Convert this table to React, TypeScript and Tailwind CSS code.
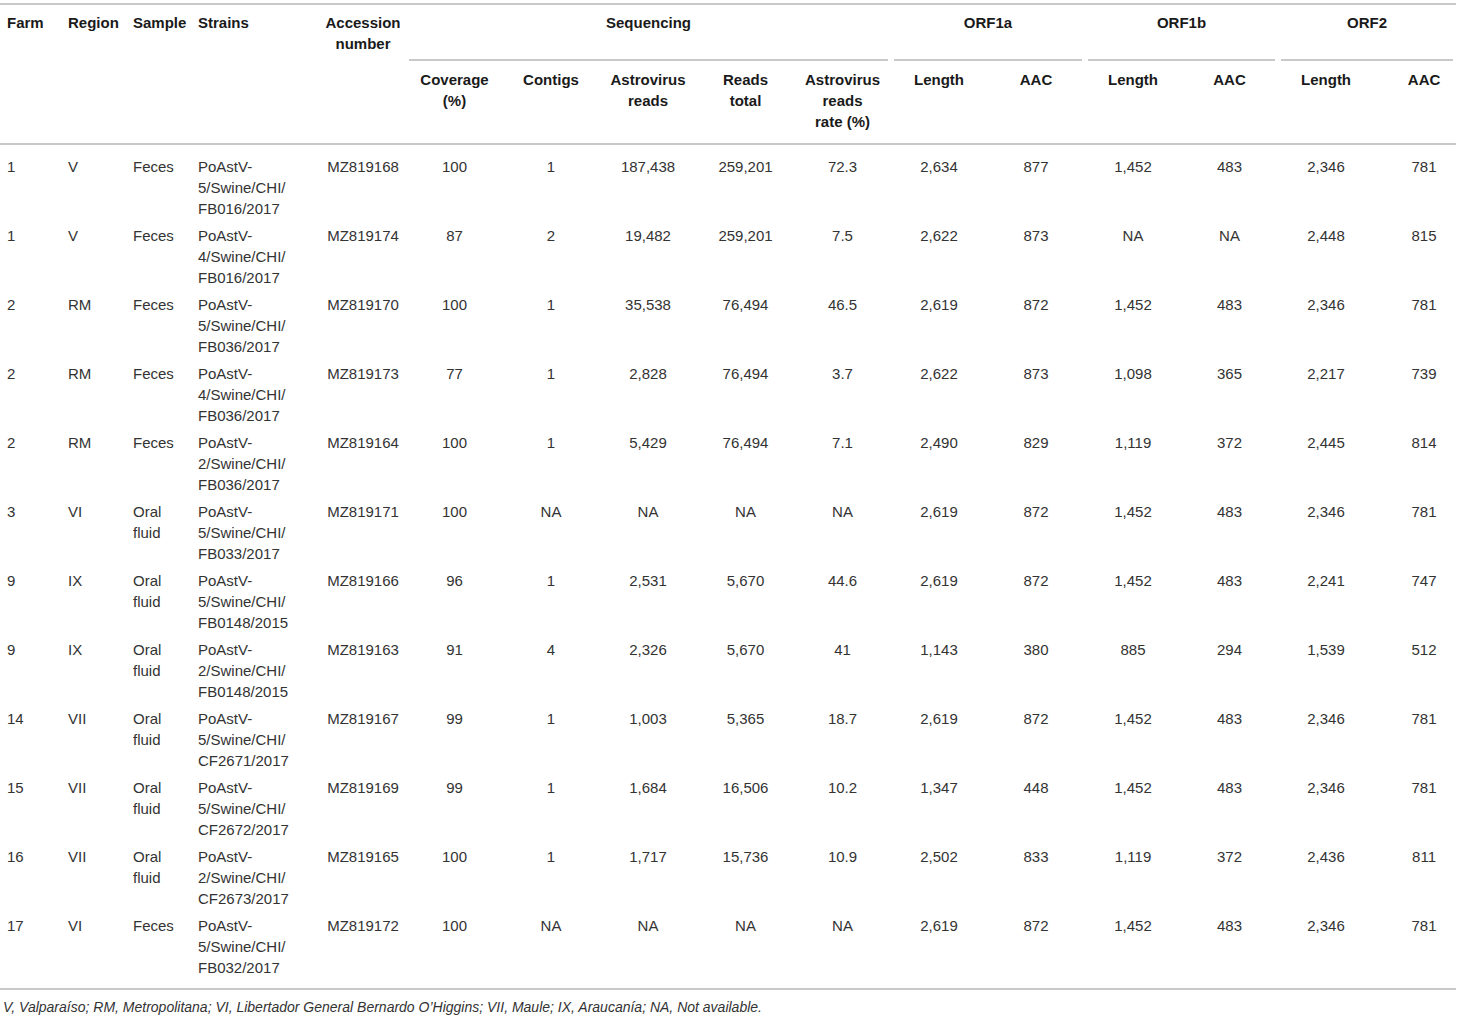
import React from "react";

type Row = {
  farm: string;
  region: string;
  sample: string[];
  strain: string[];
  acc: string;
  vals: string[];
};

const STRAIN = (n: string, id: string) => [`PoAstV-`, `${n}/Swine/CHI/`, id];

const ROWS: Row[] = [
  { farm: "1", region: "V", sample: ["Feces"], strain: STRAIN("5", "FB016/2017"), acc: "MZ819168", vals: ["100", "1", "187,438", "259,201", "72.3", "2,634", "877", "1,452", "483", "2,346", "781"] },
  { farm: "1", region: "V", sample: ["Feces"], strain: STRAIN("4", "FB016/2017"), acc: "MZ819174", vals: ["87", "2", "19,482", "259,201", "7.5", "2,622", "873", "NA", "NA", "2,448", "815"] },
  { farm: "2", region: "RM", sample: ["Feces"], strain: STRAIN("5", "FB036/2017"), acc: "MZ819170", vals: ["100", "1", "35,538", "76,494", "46.5", "2,619", "872", "1,452", "483", "2,346", "781"] },
  { farm: "2", region: "RM", sample: ["Feces"], strain: STRAIN("4", "FB036/2017"), acc: "MZ819173", vals: ["77", "1", "2,828", "76,494", "3.7", "2,622", "873", "1,098", "365", "2,217", "739"] },
  { farm: "2", region: "RM", sample: ["Feces"], strain: STRAIN("2", "FB036/2017"), acc: "MZ819164", vals: ["100", "1", "5,429", "76,494", "7.1", "2,490", "829", "1,119", "372", "2,445", "814"] },
  { farm: "3", region: "VI", sample: ["Oral", "fluid"], strain: STRAIN("5", "FB033/2017"), acc: "MZ819171", vals: ["100", "NA", "NA", "NA", "NA", "2,619", "872", "1,452", "483", "2,346", "781"] },
  { farm: "9", region: "IX", sample: ["Oral", "fluid"], strain: STRAIN("5", "FB0148/2015"), acc: "MZ819166", vals: ["96", "1", "2,531", "5,670", "44.6", "2,619", "872", "1,452", "483", "2,241", "747"] },
  { farm: "9", region: "IX", sample: ["Oral", "fluid"], strain: STRAIN("2", "FB0148/2015"), acc: "MZ819163", vals: ["91", "4", "2,326", "5,670", "41", "1,143", "380", "885", "294", "1,539", "512"] },
  { farm: "14", region: "VII", sample: ["Oral", "fluid"], strain: STRAIN("5", "CF2671/2017"), acc: "MZ819167", vals: ["99", "1", "1,003", "5,365", "18.7", "2,619", "872", "1,452", "483", "2,346", "781"] },
  { farm: "15", region: "VII", sample: ["Oral", "fluid"], strain: STRAIN("5", "CF2672/2017"), acc: "MZ819169", vals: ["99", "1", "1,684", "16,506", "10.2", "1,347", "448", "1,452", "483", "2,346", "781"] },
  { farm: "16", region: "VII", sample: ["Oral", "fluid"], strain: STRAIN("2", "CF2673/2017"), acc: "MZ819165", vals: ["100", "1", "1,717", "15,736", "10.9", "2,502", "833", "1,119", "372", "2,436", "811"] },
  { farm: "17", region: "VI", sample: ["Feces"], strain: STRAIN("5", "FB032/2017"), acc: "MZ819172", vals: ["100", "NA", "NA", "NA", "NA", "2,619", "872", "1,452", "483", "2,346", "781"] },
];

const COL_WIDTHS = [62, 64, 66, 128, 86, 97, 96, 98, 97, 97, 96, 98, 96, 97, 96, 82];

const SUB_HEADERS: string[][] = [
  ["Coverage", "(%)"],
  ["Contigs"],
  ["Astrovirus", "reads"],
  ["Reads", "total"],
  ["Astrovirus", "reads", "rate (%)"],
  ["Length"],
  ["AAC"],
  ["Length"],
  ["AAC"],
  ["Length"],
  ["AAC"],
];

const GROUPS = [
  { label: "Sequencing", span: 5 },
  { label: "ORF1a", span: 2 },
  { label: "ORF1b", span: 2 },
  { label: "ORF2", span: 2 },
];

function Lines({ lines }: { lines: string[] }) {
  return (
    <>
      {lines.map((l, i) => (
        <div key={i}>{l}</div>
      ))}
    </>
  );
}

export default function App() {
  return (
    <div className="w-[1458px] overflow-hidden bg-white pt-[3px] font-['Liberation_Sans',Arial,sans-serif] text-[15px] leading-[21px] text-[#333]">
      <table className="w-[1456px] table-fixed border-collapse">
        <colgroup>
          {COL_WIDTHS.map((w, i) => (
            <col key={i} style={{ width: w }} />
          ))}
        </colgroup>
        <thead className="border-y-2 border-[#c9c9c9] font-bold text-[#1a1a1a]">
          <tr>
            <th rowSpan={2} className="pl-[7px] pt-[7px] text-left align-top font-bold">Farm</th>
            <th rowSpan={2} className="pl-[6px] pt-[7px] text-left align-top font-bold">Region</th>
            <th rowSpan={2} className="pl-[7px] pt-[7px] text-left align-top font-bold">Sample</th>
            <th rowSpan={2} className="pl-[6px] pt-[7px] text-left align-top font-bold">Strains</th>
            <th rowSpan={2} className="pt-[7px] text-center align-top font-bold">
              <Lines lines={["Accession", "number"]} />
            </th>
            {GROUPS.map((g) => (
              <th key={g.label} colSpan={g.span} className="p-0 align-top font-bold">
                <div className="flex h-[56px] flex-col justify-between">
                  <div className="pt-[7px] text-center">{g.label}</div>
                  <div className="mx-[3px] h-[2px] bg-[#c9c9c9]" />
                </div>
              </th>
            ))}
          </tr>
          <tr className="h-[83px]">
            {SUB_HEADERS.map((h, i) => (
              <th
                key={i}
                className={`pt-[8px] text-center align-top font-bold ${i === SUB_HEADERS.length - 1 ? "pl-[18px]" : ""}`}
              >
                <Lines lines={h} />
              </th>
            ))}
          </tr>
        </thead>
        <tbody className="border-b-2 border-[#c9c9c9]">
          {ROWS.map((r, ri) => {
            const pad =
              ri === 0 ? "pt-[11px] pb-[3px]" : ri === ROWS.length - 1 ? "pt-[3px] pb-[10px]" : "py-[3px]";
            return (
              <tr key={ri}>
                <td className={`${pad} pl-[7px] align-top`}>{r.farm}</td>
                <td className={`${pad} pl-[6px] align-top`}>{r.region}</td>
                <td className={`${pad} pl-[7px] align-top`}>
                  <Lines lines={r.sample} />
                </td>
                <td className={`${pad} pl-[6px] align-top`}>
                  <Lines lines={r.strain} />
                </td>
                <td className={`${pad} text-center align-top`}>{r.acc}</td>
                {r.vals.map((v, vi) => (
                  <td
                    key={vi}
                    className={`${pad} text-center align-top ${vi === r.vals.length - 1 ? "pl-[18px]" : ""}`}
                  >
                    {v}
                  </td>
                ))}
              </tr>
            );
          })}
        </tbody>
      </table>
      <p className="pl-[3px] pt-[7px] text-[14px] italic leading-[21px] text-[#333]">
        V, Valparaíso; RM, Metropolitana; VI, Libertador General Bernardo O’Higgins; VII, Maule; IX, Araucanía; NA, Not available.
      </p>
    </div>
  );
}
